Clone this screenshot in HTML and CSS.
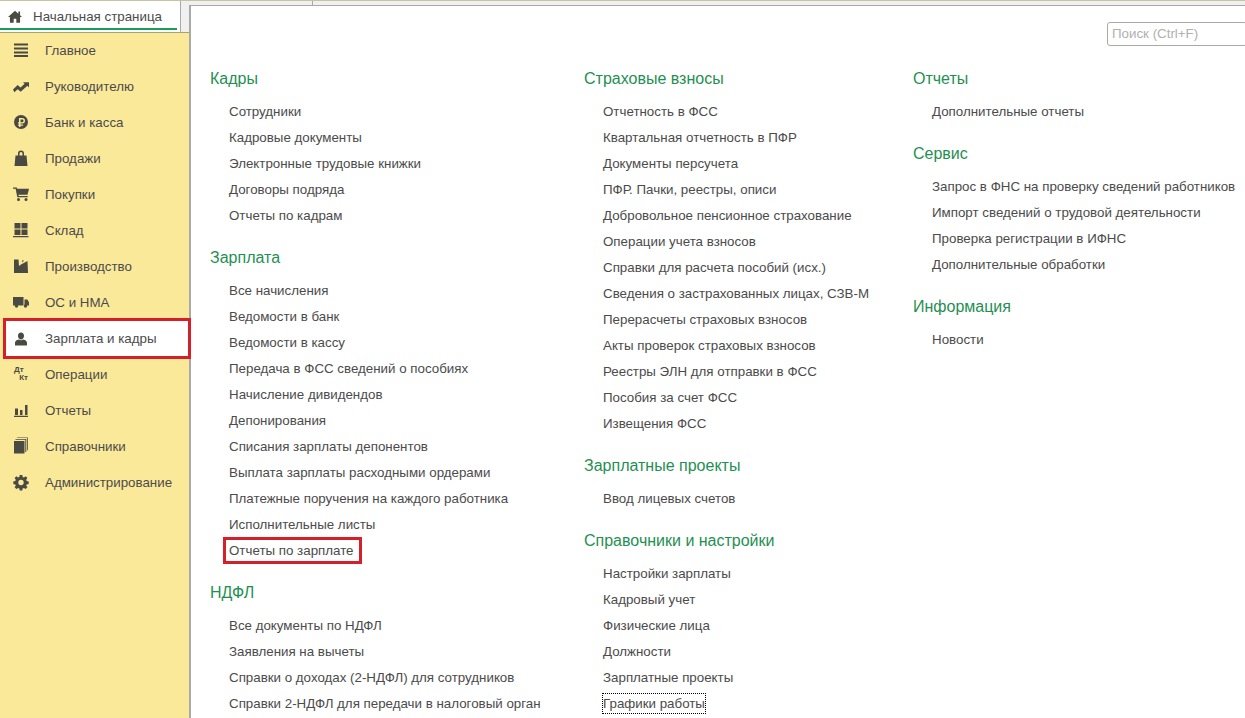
FILE: index.html
```html
<!DOCTYPE html>
<html lang="ru">
<head>
<meta charset="utf-8">
<title>Зарплата и кадры</title>
<link rel="stylesheet" href="styles.css">
</head>
<body>
<div class="app">
  <aside class="left">
    <div class="tabbar">
      <div class="tab">
        <svg class="home" viewBox="0 0 16 14"><path d="M8 .5 0 7.600h2.200V14h4.300V9.500h3V14h4.300V7.600H16l-2.200-2V1.200h-2v2.600z"/></svg>
        <span>Начальная страница</span>
      </div>
    </div>
    <nav class="nav">
      <a class="nav-item"><svg class="ico" viewBox="0 0 16 16"><path d="M1 1.500h14v2H1zM1 5.500h14v2H1zM1 9.500h14v2H1zM1 13h14v2H1z"/></svg><span>Главное</span></a>
      <a class="nav-item"><svg class="ico" viewBox="0 0 16 16"><path d="M0 11.500 4.600 6.900l3 2.600 4-3.800-1.700-1.500H16v5.200l-1.600-1.600-6.700 6-3-2.600-3.300 3z"/></svg><span>Руководителю</span></a>
      <a class="nav-item"><svg class="ico" viewBox="0 0 16 16"><path fill-rule="evenodd" d="M8 1a7 7 0 1 1 0 14A7 7 0 0 1 8 1zM6 4v4.200H5v1.300h1v1H5v1.200h1V13h1.500v-1.300h2.600v-1.200H7.500v-1h1.700a2.750 2.750 0 0 0 0-5.500zm1.500 1.400h1.700a1.400 1.400 0 0 1 0 2.800H7.500z"/></svg><span>Банк и касса</span></a>
      <a class="nav-item"><svg class="ico" viewBox="0 0 16 16"><path fill-rule="evenodd" d="M2.500 5.500H5V3.500a3 3 0 0 1 6 0v2h2.500l1 10.500h-13zM6.500 5.500h3v-2a1.500 1.500 0 0 0-3 0z"/></svg><span>Продажи</span></a>
      <a class="nav-item"><svg class="ico" viewBox="0 0 16 16"><path d="M0 1.500h3.700l.5 1.300H16l-1.500 6H5.400l.3 1.100h9v1.300H4.300L2.600 2.800H0z"/><circle cx="5.500" cy="13.500" r="1.500"/><circle cx="13" cy="13.500" r="1.500"/></svg><span>Покупки</span></a>
      <a class="nav-item"><svg class="ico" viewBox="0 0 16 16"><path d="M1.500 1h6v5.500h-6zM8.500 1h6v5.500h-6zM1.500 7.500h6V13h-6zM8.500 7.500h6V13h-6zM0 14h15.500v1.300H0z"/></svg><span>Склад</span></a>
      <a class="nav-item"><svg class="ico" viewBox="0 0 16 16"><path d="M1 1.500h4.500L6 8l2-1.500 6.500-3.500.5 12H1zM9 2.500h2L9.500 4.500z"/></svg><span>Производство</span></a>
      <a class="nav-item"><svg class="ico" viewBox="0 0 16 16"><path d="M0 3h10.500v8.500H0zM11.500 5.500h2.800L16 8.300v3.200h-4.500z"/><circle cx="3.500" cy="12" r="1.700"/><circle cx="12.500" cy="12" r="1.700"/></svg><span>ОС и НМА</span></a>
      <a class="nav-item nav-current"><svg class="ico" viewBox="0 0 16 16"><path d="M8 1.500c1.900 0 3 1.400 3 3.300S9.900 8.500 8 8.500 5 6.700 5 4.800 6.100 1.500 8 1.500zM5.700 8.500c1.400 1 3.200 1 4.600 0 2.300.5 3.700 1.800 3.700 3.200v2.800H2v-2.800c0-1.400 1.400-2.700 3.700-3.200z"/></svg><span>Зарплата и кадры</span></a>
      <a class="nav-item"><span class="dtkt"><b>Дт</b><b class="kt">Кт</b></span><span>Операции</span></a>
      <a class="nav-item"><svg class="ico" viewBox="0 0 16 16"><path d="M2 6.500h3v6.500H2zM7 8h2.500v5H7zM12 3h2.500v10H12zM1 13.800h14V15H1z"/></svg><span>Отчеты</span></a>
      <a class="nav-item"><svg class="ico" viewBox="0 0 16 16"><path d="M1 3h10.500v12.500H1zM12.300 1.800H2.500V1h10.800v13h-1zM14 0H4v-.5h10.800v12.800H14z"/></svg><span>Справочники</span></a>
      <a class="nav-item"><svg class="ico" viewBox="0 0 16 16"><path fill-rule="evenodd" d="M6.700 1h2.600l.4 2 1.200.5 1.700-1.200 1.800 1.800-1.200 1.700.5 1.200 2 .4v2.600l-2 .4-.5 1.200 1.200 1.700-1.800 1.800-1.700-1.200-1.200.5-.4 2H6.700l-.4-2-1.200-.5-1.700 1.200-1.800-1.800 1.200-1.700-.5-1.200-2-.4V7.400l2-.4.500-1.200-1.200-1.700 1.800-1.800 1.700 1.200 1.200-.5zM8 5.800a2.700 2.700 0 1 0 0 5.400 2.700 2.700 0 0 0 0-5.400z"/></svg><span>Администрирование</span></a>
    </nav>
  </aside>
  <div class="right">
    <div class="strip"><i class="tick"></i></div>
    <main class="panel">
      <div class="searchrow"><div class="search">Поиск (Ctrl+F)</div></div>
      <div class="cols">
        <div class="col">
          <section class="sec"><h2>Кадры</h2>
            <a class="lnk">Сотрудники</a><a class="lnk">Кадровые документы</a><a class="lnk">Электронные трудовые книжки</a><a class="lnk">Договоры подряда</a><a class="lnk">Отчеты по кадрам</a>
          </section>
          <section class="sec"><h2>Зарплата</h2>
            <a class="lnk">Все начисления</a><a class="lnk">Ведомости в банк</a><a class="lnk">Ведомости в кассу</a><a class="lnk">Передача в ФСС сведений о пособиях</a><a class="lnk">Начисление дивидендов</a><a class="lnk">Депонирования</a><a class="lnk">Списания зарплаты депонентов</a><a class="lnk">Выплата зарплаты расходными ордерами</a><a class="lnk">Платежные поручения на каждого работника</a><a class="lnk">Исполнительные листы</a>
            <a class="lnk"><span class="redbox">Отчеты по зарплате</span></a>
          </section>
          <section class="sec"><h2>НДФЛ</h2>
            <a class="lnk">Все документы по НДФЛ</a><a class="lnk">Заявления на вычеты</a><a class="lnk">Справки о доходах (2-НДФЛ) для сотрудников</a><a class="lnk">Справки 2-НДФЛ для передачи в налоговый орган</a>
          </section>
        </div>
        <div class="col">
          <section class="sec"><h2>Страховые взносы</h2>
            <a class="lnk">Отчетность в ФСС</a><a class="lnk">Квартальная отчетность в ПФР</a><a class="lnk">Документы персучета</a><a class="lnk">ПФР. Пачки, реестры, описи</a><a class="lnk">Добровольное пенсионное страхование</a><a class="lnk">Операции учета взносов</a><a class="lnk">Справки для расчета пособий (исх.)</a><a class="lnk">Сведения о застрахованных лицах, СЗВ-М</a><a class="lnk">Перерасчеты страховых взносов</a><a class="lnk">Акты проверок страховых взносов</a><a class="lnk">Реестры ЭЛН для отправки в ФСС</a><a class="lnk">Пособия за счет ФСС</a><a class="lnk">Извещения ФСС</a>
          </section>
          <section class="sec"><h2>Зарплатные проекты</h2>
            <a class="lnk">Ввод лицевых счетов</a>
          </section>
          <section class="sec"><h2>Справочники и настройки</h2>
            <a class="lnk">Настройки зарплаты</a><a class="lnk">Кадровый учет</a><a class="lnk">Физические лица</a><a class="lnk">Должности</a><a class="lnk">Зарплатные проекты</a>
            <a class="lnk"><span class="focusbox">Графики работы</span></a>
          </section>
        </div>
        <div class="col">
          <section class="sec"><h2>Отчеты</h2>
            <a class="lnk">Дополнительные отчеты</a>
          </section>
          <section class="sec"><h2>Сервис</h2>
            <a class="lnk">Запрос в ФНС на проверку сведений работников</a><a class="lnk">Импорт сведений о трудовой деятельности</a><a class="lnk">Проверка регистрации в ИФНС</a><a class="lnk">Дополнительные обработки</a>
          </section>
          <section class="sec"><h2>Информация</h2>
            <a class="lnk">Новости</a>
          </section>
        </div>
      </div>
    </main>
  </div>
</div>
</body>
</html>
```
FILE: styles.css
```css
* { box-sizing: border-box; }
html, body { margin: 0; height: 718px; overflow: hidden; background: #fff; }
body { font: 13.33px "Liberation Sans", Arial, sans-serif; color: #4b4b4b; }
.app { display: flex; height: 718px; overflow: hidden; border-top: 1px solid #c8c3a0; }
.left { width: 190px; flex: none; display: flex; flex-direction: column; }
.tabbar { height: 31px; flex: none; display: flex; background: #f0f0f0; }
.tab { width: 181px; height: 31px; background: #fff; border-right: 1px solid #a9a9a9; position: relative; display: flex; align-items: center; padding: 0 0 1px 8px; color: #4b4b4b; }
.tab::after { content: ""; position: absolute; left: 0; top: 27px; width: 177px; height: 2px; background: #1a9c5b; }
.home { width: 14px; height: 13px; fill: #4a4a42; margin-right: 11px; flex: none; }
.nav { flex: 1; background: #fbe99a; box-shadow: inset 0 1px #a8a26e; border-right: 1px solid #a8a26e; }
.nav-item { display: flex; align-items: center; height: 36px; padding-left: 13px; }
.nav-item > span:last-child { margin-left: 16px; }
.ico { width: 16px; height: 16px; fill: #4a4a42; flex: none; overflow: visible; }
.nav-current { background: #fff; margin: 1px 1px 0 6px; padding-left: 7px; height: 35px; outline: 3px solid #d5202a; position: relative; }
.dtkt { width: 16px; flex: none; display: flex; flex-direction: column; font-size: 8px; line-height: 8px; color: #4a4a42; padding: 0 1px; }
.dtkt b { font-weight: bold; }
.kt { align-self: flex-end; }
.right { flex: 1; min-width: 0; display: flex; flex-direction: column; background: #f0f0f0; }
.strip { height: 4px; flex: none; position: relative; }
.tick { position: absolute; left: 122px; top: 0; width: 1px; height: 4px; background: #a9a9a9; }
.panel { flex: 1; background: #fff; border-top: 1px solid #a9a9a9; border-left: 2px solid #a9a9a9; margin-left: -1px; padding-left: 19px; }
.searchrow { height: 63px; padding-top: 16px; display: flex; justify-content: flex-end; }
.search { width: 140px; height: 24px; margin-right: -2px; flex: none; border: 1px solid #a9a9a9; border-radius: 3px; color: #b0b0b0; padding: 3px 0 0 4px; }
.cols { display: grid; grid-template-columns: 374px 329px 1fr; }
.sec { margin-bottom: 19px; }
.sec h2 { margin: 0 0 10px; height: 20px; line-height: 20px; font-size: 16px; font-weight: normal; color: #1f8f52; }
.lnk { display: block; height: 26px; line-height: 26px; padding-left: 19px; white-space: nowrap; }
.redbox { outline: 3px solid #d5202a; outline-offset: 2px; display: inline-block; line-height: 17px; padding: 0 3px 0 1px; margin-left: -1px; }
.focusbox { outline: 1px dotted #000; display: inline-block; line-height: 19px; }
```
